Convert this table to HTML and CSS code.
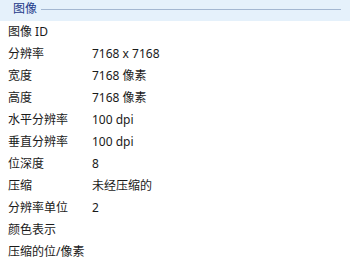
FILE: index.html
```html
<!DOCTYPE html>
<html lang="zh">
<head>
<meta charset="utf-8">
<link rel="stylesheet" href="styles.css">
</head>
<body>
<div class="panel">
  <div class="group-header">
    <span class="group-title">图像</span>
    <span class="group-line"></span>
  </div>
  <div class="rows">
    <div class="row"><span class="label">图像 ID</span><span class="value"></span></div>
    <div class="row"><span class="label">分辨率</span><span class="value">7168 x 7168</span></div>
    <div class="row"><span class="label">宽度</span><span class="value">7168 像素</span></div>
    <div class="row"><span class="label">高度</span><span class="value">7168 像素</span></div>
    <div class="row"><span class="label">水平分辨率</span><span class="value">100 dpi</span></div>
    <div class="row"><span class="label">垂直分辨率</span><span class="value">100 dpi</span></div>
    <div class="row"><span class="label">位深度</span><span class="value">8</span></div>
    <div class="row"><span class="label">压缩</span><span class="value">未经压缩的</span></div>
    <div class="row"><span class="label">分辨率单位</span><span class="value">2</span></div>
    <div class="row"><span class="label">颜色表示</span><span class="value"></span></div>
    <div class="row"><span class="label">压缩的位/像素</span><span class="value"></span></div>
  </div>
</div>
</body>
</html>
```

FILE: styles.css
```css
html, body {
  margin: 0;
  padding: 0;
  background: #ffffff;
}
body {
  font-family: "Noto Sans", "Noto Sans CJK SC", sans-serif;
  font-size: 12px;
  color: #1a1a1a;
}
.panel {
  width: 350px;
  height: 266px;
  overflow: hidden;
}
.group-header {
  height: 21px;
  background: #e5f1fb;
  display: flex;
  align-items: flex-start;
  padding-left: 13px;
  padding-right: 9px;
  box-sizing: border-box;
}
.group-title {
  color: #1e3a8a;
  line-height: 18px;
  font-size: 12px;
}
.group-line {
  flex: 1;
  height: 1px;
  background: #a3b7d1;
  margin-top: 9px;
  margin-left: 4px;
}
.rows {
  display: flex;
  flex-direction: column;
}
.row {
  display: flex;
  height: 22px;
  align-items: center;
  padding-left: 8px;
  line-height: 16px;
}
.label {
  width: 84px;
  flex: none;
}
.value {
  flex: 1;
}
```
